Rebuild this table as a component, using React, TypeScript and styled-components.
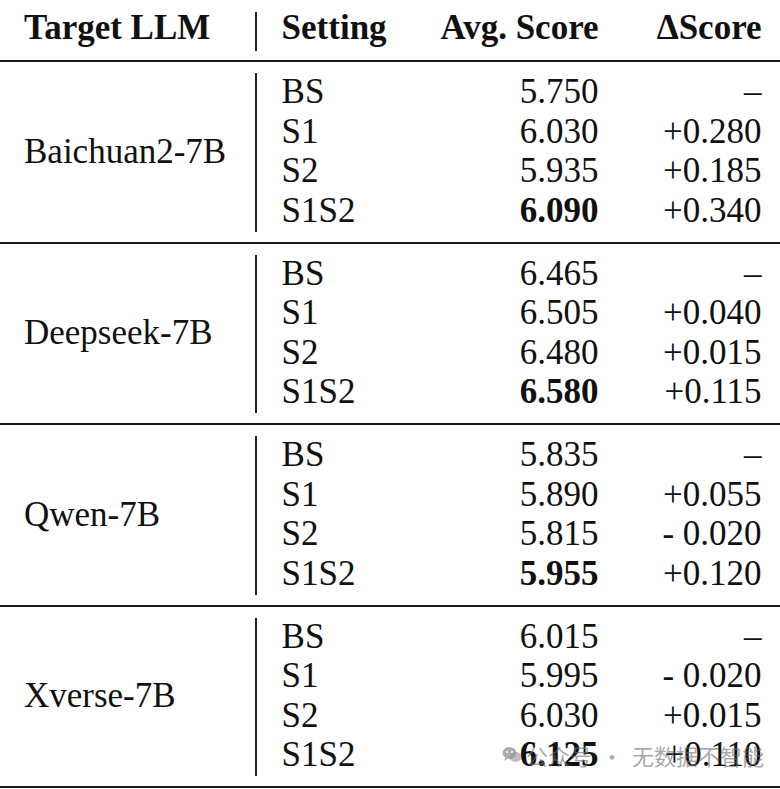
import React from "react";
import styled, { createGlobalStyle } from "styled-components";

const Global = createGlobalStyle`
  html, body { margin: 0; padding: 0; background: #ffffff; }
  body { font-family: "Liberation Serif", "Times New Roman", serif; color: #111111; }
`;

const Page = styled.div`
  position: relative;
  width: 780px;
  height: 789px;
  overflow: hidden;
  background: #fff;
`;

const Rule = styled.div`
  height: 2px;
  background: #1c1c1c;
`;

const Band = styled.div<{ $header?: boolean }>`
  display: flex;
  align-items: stretch;
  height: ${(p) => (p.$header ? "60px" : "179.5px")};
`;

const LabelCell = styled.div<{ $bold?: boolean; $top?: number }>`
  width: 255px;
  box-sizing: border-box;
  padding-left: 24px;
  padding-top: ${(p) => p.$top ?? 0}px;
  display: flex;
  align-items: ${(p) => (p.$top !== undefined ? "flex-start" : "center")};
  font-size: 35px;
  font-weight: ${(p) => (p.$bold ? 700 : 400)};
  line-height: 39.6px;
  white-space: nowrap;
`;

const Divider = styled.div<{ $top: number; $bottom: number }>`
  width: 1.6px;
  background: #222;
  margin-top: ${(p) => p.$top}px;
  margin-bottom: ${(p) => p.$bottom}px;
`;

const Rows = styled.div<{ $top: number }>`
  flex: 1;
  padding-top: ${(p) => p.$top}px;
  display: flex;
  flex-direction: column;
`;

const Row = styled.div<{ $bold?: boolean }>`
  display: grid;
  grid-template-columns: 160px 157px 163px;
  padding-left: 25px;
  font-size: 35px;
  line-height: 39.6px;
  white-space: nowrap;
  font-weight: ${(p) => (p.$bold ? 700 : 400)};
`;

const Cell = styled.div<{ $right?: boolean; $bold?: boolean }>`
  text-align: ${(p) => (p.$right ? "right" : "left")};
  font-weight: ${(p) => (p.$bold ? 700 : "inherit")};
`;

const Watermark = styled.div`
  position: absolute;
  left: 502px;
  top: 741px;
  display: flex;
  align-items: center;
  gap: 4px;
  font-family: "Noto Sans CJK SC", sans-serif;
  font-size: 22px;
  line-height: 28px;
  color: rgba(110, 110, 110, 0.6);
  white-space: nowrap;
  pointer-events: none;
`;

const Dot = styled.span`
  margin: 0 9px;
`;

type Group = {
  name: string;
  rows: { s: string; avg: string; d: string; best?: boolean }[];
};

const groups: Group[] = [
  {
    name: "Baichuan2-7B",
    rows: [
      { s: "BS", avg: "5.750", d: "–" },
      { s: "S1", avg: "6.030", d: "+0.280" },
      { s: "S2", avg: "5.935", d: "+0.185" },
      { s: "S1S2", avg: "6.090", d: "+0.340", best: true },
    ],
  },
  {
    name: "Deepseek-7B",
    rows: [
      { s: "BS", avg: "6.465", d: "–" },
      { s: "S1", avg: "6.505", d: "+0.040" },
      { s: "S2", avg: "6.480", d: "+0.015" },
      { s: "S1S2", avg: "6.580", d: "+0.115", best: true },
    ],
  },
  {
    name: "Qwen-7B",
    rows: [
      { s: "BS", avg: "5.835", d: "–" },
      { s: "S1", avg: "5.890", d: "+0.055" },
      { s: "S2", avg: "5.815", d: "- 0.020" },
      { s: "S1S2", avg: "5.955", d: "+0.120", best: true },
    ],
  },
  {
    name: "Xverse-7B",
    rows: [
      { s: "BS", avg: "6.015", d: "–" },
      { s: "S1", avg: "5.995", d: "- 0.020" },
      { s: "S2", avg: "6.030", d: "+0.015" },
      { s: "S1S2", avg: "6.125", d: "+0.110", best: true },
    ],
  },
];

const WeChatIcon = () => (
  <svg width="20" height="18" viewBox="0 0 20 18" aria-hidden="true">
    <ellipse cx="7.5" cy="7" rx="7" ry="6" fill="rgba(120,120,120,0.6)" />
    <path d="M3 12 L2.5 15 L6 12.5 Z" fill="rgba(120,120,120,0.6)" />
    <ellipse cx="13.5" cy="11" rx="6" ry="5" fill="rgba(150,150,150,0.6)" />
    <circle cx="5" cy="6" r="1" fill="#fff" />
    <circle cx="10" cy="6" r="1" fill="#fff" />
  </svg>
);

export default function App() {
  return (
    <Page>
      <Global />
      <Band $header>
        <LabelCell $bold $top={8}>
          Target LLM
        </LabelCell>
        <Divider $top={12} $bottom={9} />
        <Rows $top={8}>
          <Row $bold style={{ gridTemplateColumns: "155px 162px 163px" }}>
            <Cell>Setting</Cell>
            <Cell $right>Avg. Score</Cell>
            <Cell $right>ΔScore</Cell>
          </Row>
        </Rows>
      </Band>
      <Rule />
      {groups.map((g) => (
        <React.Fragment key={g.name}>
          <Band>
            <LabelCell>{g.name}</LabelCell>
            <Divider $top={11} $bottom={10} />
            <Rows $top={10}>
              {g.rows.map((r) => (
                <Row key={r.s}>
                  <Cell>{r.s}</Cell>
                  <Cell $right $bold={r.best}>
                    {r.avg}
                  </Cell>
                  <Cell $right>{r.d}</Cell>
                </Row>
              ))}
            </Rows>
          </Band>
          <Rule />
        </React.Fragment>
      ))}
      <Watermark>
        <WeChatIcon />
        <span>
          公众号<Dot>·</Dot>无数据不智能
        </span>
      </Watermark>
    </Page>
  );
}
